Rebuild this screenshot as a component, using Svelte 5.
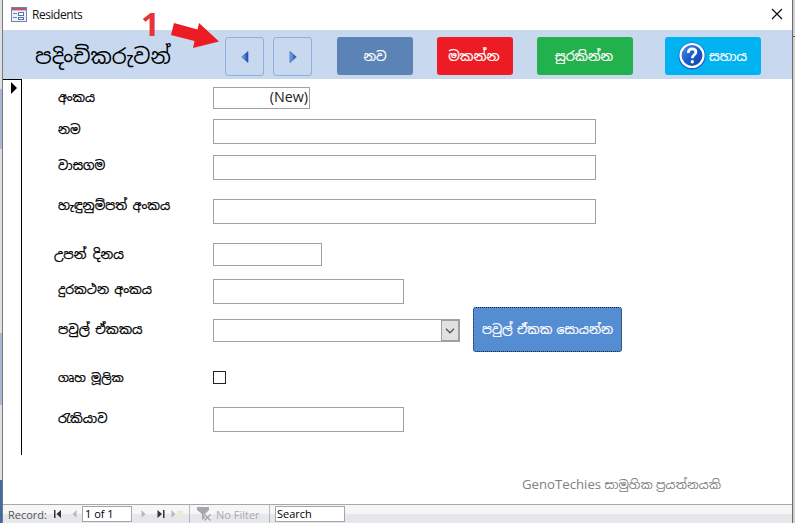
<script>
  const rows = [
    { label: 'අංකය', gap: 8, height: 22, width: 97, lift: 0, value: '(New)', size: 12.4 },
    { label: 'නම', gap: 10, height: 25, width: 383, lift: 2, size: 12.5 },
    { label: 'වාසගම', gap: 11, height: 25, width: 383, lift: 3, size: 12.7 },
    { label: 'හැඳුනුම්පත් අංකය', gap: 19, height: 25, width: 383, lift: 6, size: 12.6, space: 2 },
    { label: 'උපන් දිනය', gap: 19, height: 23, width: 109, lift: 1, shift: -4, size: 13.2, space: 3 },
    { label: 'දුරකථන අංකය', gap: 13, height: 25, width: 191, lift: 2, size: 12.6, space: 2 },
    { label: 'පවුල් ඒකකය', gap: 15, height: 23, width: 247, lift: 2, kind: 'combo', size: 13, space: 2 },
    { label: 'ගෘහ මූලික', gap: 29, height: 13, width: 13, lift: 0, kind: 'check', size: 12.1, space: 2 },
    { label: 'රැකියාව', gap: 23, height: 25, width: 191, lift: 2, size: 12.7 }
  ];
</script>

<div class="screen">
  <div class="edge left"><i class="a"></i><b></b><i class="c"></i></div>
  <main>
    <div class="titlebar">
      <svg width="16" height="15" viewBox="0 0 16 15" shape-rendering="crispEdges">
        <rect x=".5" y=".5" width="15" height="14" fill="#eef2fa" stroke="#7484a8" />
        <path d="M1 1h14v2H1z" fill="#b5586d" />
        <path d="M1 3h14v1H1z" fill="#d8b4c4" />
        <path d="M2 6h4v1H2zM2 10h4v1H2z" fill="#6483b8" />
        <path d="M7.500 5.500h5v3h-5zM7.500 10.500h5v2h-5z" fill="#fff" stroke="#5374b2" />
      </svg>
      <span>Residents</span>
      <svg class="close" width="12" height="12" viewBox="0 0 12 12"><path d="M1 1l10 10M11 1L1 11" stroke="#111" stroke-width="1.2" /></svg>
    </div>
    <header>
      <h1>පදිංචිකරුවන්</h1>
      <button class="nav"><svg width="8" height="12" viewBox="0 0 8 12"><defs><linearGradient id="g1"><stop stop-color="#8bbcf2" /><stop offset="1" stop-color="#173fae" /></linearGradient></defs><path d="M7 .5v11L.7 6z" fill="url(#g1)" stroke="#3562b7" stroke-width=".7" /></svg></button>
      <button class="nav second"><svg width="8" height="12" viewBox="0 0 8 12"><defs><linearGradient id="g2"><stop stop-color="#79b3ee" /><stop offset="1" stop-color="#173fae" /></linearGradient></defs><path d="M1 .5v11L7.300 6z" fill="url(#g2)" stroke="#3562b7" stroke-width=".7" /></svg></button>
      <button class="new">නව</button>
      <button class="delete">මකන්න</button>
      <button class="save">සුරකින්න</button>
      <button class="help">
        <svg width="28" height="28" viewBox="0 0 28 28">
          <defs><linearGradient id="g3" x2="1" y2="1"><stop stop-color="#4d98ee" /><stop offset=".5" stop-color="#1b5ccc" /><stop offset="1" stop-color="#123da2" /></linearGradient></defs>
          <circle cx="14" cy="14" r="13.500" fill="#1960c5" />
          <circle cx="14" cy="13.500" r="11.500" fill="url(#g3)" stroke="#fff" stroke-width="2.200" />
          <path d="M10.300 11c0-2.700 1.500-4.200 3.900-4.200 2.300 0 3.700 1.300 3.700 3.200 0 3.100-3.600 3.100-3.600 6.200" fill="none" stroke="#fff" stroke-width="2.700" />
          <circle cx="14.300" cy="19.700" r="1.700" fill="#fff" />
        </svg>
        <span>සහාය</span>
      </button>
    </header>
    <section>
      <div class="selector"><svg width="6" height="12" viewBox="0 0 6 12"><path d="M0 0l6 6-6 6z" /></svg></div>
      <div class="form">
        {#each rows as r}
          <div class="row" style="margin-top:{r.gap}px;height:{r.height}px">
            <label class:outdent={r.shift} style="padding-bottom:{r.lift * 2}px;font-size:{r.size}px;word-spacing:{r.space ?? 0}px"><span>{r.label}</span></label>
            <div class="field {r.kind ?? ''}" style="width:{r.width}px">
              {#if r.value}{r.value}{/if}
              {#if r.kind === 'combo'}
                <div class="drop"><svg width="10" height="6" viewBox="0 0 10 6"><path d="M1 .8l4 4 4-4" fill="none" stroke="#555" stroke-width="1.300" /></svg></div>
              {/if}
            </div>
            {#if r.kind === 'combo'}<button class="find">පවුල් ඒකක සොයන්න</button>{/if}
          </div>
        {/each}
        <p><span class="brand">GenoTechies</span> <span class="effort">සාමුහික ප්‍රයත්නයකි</span></p>
      </div>
    </section>
    <footer>
      <span class="record">Record:</span>
      <svg class="first" width="8" height="8" viewBox="0 0 8 8"><path d="M0 0h1.500v8H0zM7 0v8L2.500 4z" fill="#333" /></svg>
      <svg class="prev" width="5" height="8" viewBox="0 0 5 8"><path d="M4.500 0v8L.5 4z" fill="#b8babe" /></svg>
      <div class="count">1 of 1</div>
      <svg class="next" width="5" height="8" viewBox="0 0 5 8"><path d="M.5 0v8l4-4z" fill="#b8babe" /></svg>
      <svg class="last" width="8" height="8" viewBox="0 0 8 8"><path d="M6 0h1.500v8H6zM.5 0v8L5 4z" fill="#333" /></svg>
      <svg class="add" width="13" height="10" viewBox="0 0 13 10"><path d="M.5 1v8l4-4z" fill="#b8babe" /><path d="M6 2h6v6H6z" fill="#efe8d3" /></svg>
      <i class="sep s1"></i>
      <svg class="funnel" width="15" height="15" viewBox="0 0 15 15"><path d="M0 0h12v3L8 7v4l-3 2V7L0 3z" fill="#a5a7aa" /><path d="M7.500 7.500l6 6M13.500 7.500l-6 6" stroke="#f0f1f4" stroke-width="3" /><path d="M7.500 7.500l6 6M13.500 7.500l-6 6" stroke="#a5a7aa" stroke-width="1.600" /></svg>
      <span class="nofilter">No Filter</span>
      <i class="sep s2"></i>
      <div class="search">Search</div>
    </footer>
    <div class="callout">
      <span>1</span>
      <svg width="50" height="27" viewBox="0 0 50 27"><path d="M4 1l23.500 6.500L29 1l20 18.500L23 26l1.500-7L1 13z" fill="#ed1c24" /></svg>
    </div>
  </main>
  <div class="edge right"></div>
</div>

<style>
  :global(body) { overflow: hidden; background: #fff; }
  .screen { width: 795px; height: 523px; display: flex; font-family: "Open Sans", "Noto Sans", "Noto Sans Sinhala", sans-serif; overflow: hidden; }
  .edge { box-sizing: border-box; flex: none; display: flex; flex-direction: column; }
  .left { width: 3px; background: #dedfe1; border-right: 1px solid #77797c; }
  .left .a { height: 60px; margin-top: 89px; background: #a9b9d3; }
  .left b { flex: 1; }
  .left .c { height: 72px; margin-bottom: 118px; background: #a9b9d3; }
  .left::after { content: ""; height: 43px; margin-top: -43px; background: #416ba5; }
  .right { width: 3px; background: #d2d2d2; border-left: 1px solid #6b6b6b; }
  .right::after { content: ""; height: 1px; margin-top: 36px; background: #555; }
  main { position: relative; width: 789px; display: flex; flex-direction: column; background: #fff; }
  .titlebar { height: 30px; box-sizing: border-box; padding: 0 9px 2px 8px; display: flex; align-items: center; font-size: 12px; letter-spacing: -.45px; color: #111; }
  .titlebar span { margin-left: 5px; }
  .close { margin-left: auto; }
  header { height: 49px; background: #c7d8ef; display: flex; align-items: center; box-sizing: border-box; padding: 0 0 0 32px; }
  h1 { width: 190px; margin: 2px 0 0; font-size: 21.2px; line-height: 24px; font-weight: 400; white-space: nowrap; color: #000; }
  button { box-sizing: border-box; border: 0; border-radius: 3px; padding: 0; font-family: inherit; font-size: 13px; color: #fff; white-space: nowrap; flex: none; display: flex; align-items: center; justify-content: center; height: 38px; margin-top: 2px; -webkit-text-stroke: .2px; }
  .nav { width: 39px; height: 39px; margin-top: 4px; background: #c7d8ef; border: 1px solid #91afdc; }
  .second { margin-left: 9px; }
  .new { width: 76px; margin-left: 25px; background: #5b83b5; }
  .delete { width: 76px; margin-left: 24px; background: #ed1c24; font-size: 13.6px; padding-right: 2px; }
  .save { width: 96px; margin-left: 24px; background: #22b14c; padding-right: 2px; }
  .help { width: 96px; margin-left: 32px; background: #00b3f0; gap: 3px; padding-right: 1px; }
  section { height: 425px; display: flex; }
  .selector { box-sizing: border-box; width: 19px; height: 376px; border-top: 1px solid #000; border-right: 1px solid #000; padding: 2px 0 0 8px; }
  .selector svg { display: block; }
  .form { width: 770px; display: flex; flex-direction: column; padding-left: 36px; box-sizing: border-box; }
  .row { display: flex; align-items: center; flex: none; }
  label { width: 155px; flex: none; color: #000; white-space: nowrap; line-height: 20px; -webkit-text-stroke: .25px; }
  .outdent { width: 159px; margin-left: -4px; }
  .field { box-sizing: border-box; height: 100%; border: 1px solid #a0a0a0; display: flex; justify-content: flex-end; align-items: center; font-size: 14.3px; line-height: 18px; padding: 0 1px 2px 0; color: #222; flex: none; }
  .check { border-color: #222; }
  .combo { padding: 0; }
  .drop { width: 18px; height: 100%; box-sizing: border-box; background: #e1e1e1; border: 1px solid #a0a0a0; display: flex; align-items: center; justify-content: center; }
  .find { width: 149px; height: 45px; margin: 0 0 2px 13px; background: #558dd2; border: 1px dotted #10213d; font-size: 12.5px; word-spacing: 1px; }
  p { margin: 42px 0 0 464px; line-height: 20px; font-size: 13.200px; color: #808080; white-space: nowrap; }
  .effort { font-size: 12.2px; }
  footer { height: 19px; box-sizing: border-box; border-top: 1px solid #a5a8ad; background: linear-gradient(#f5f6f8 0 50%, #e5e7eb 50%); display: flex; align-items: center; font-size: 11px; padding-left: 5px; white-space: nowrap; color: #555; }
  footer svg, footer i, footer div, footer span { flex: none; }
  .record { width: 46px; }
  .prev { margin-left: 10px; }
  .count, .search { box-sizing: border-box; background: #fff; border: 1px solid #a5a7aa; height: 16px; line-height: 14px; color: #000; }
  .count { width: 50px; margin-left: 5px; padding-left: 2px; }
  .next { margin-left: 9px; }
  .last { margin-left: 11px; }
  .add { margin-left: 6px; }
  .sep { width: 1px; height: 18px; background: #b9bbc0; }
  .s1 { margin-left: 5px; }
  .funnel { margin-left: 7px; }
  .nofilter { color: #aaacb0; width: 47px; margin-left: 4px; }
  .s2 { margin-left: 6px; }
  .search { width: 70px; margin-left: 5px; padding-left: 1px; }
  .callout { position: absolute; left: 138px; top: 9px; display: flex; }
  .callout span { width: 29px; height: 29px; line-height: 29px; font-size: 33px; font-weight: 700; color: #e7343c; }
  .callout svg { margin-top: 13px; }
</style>
